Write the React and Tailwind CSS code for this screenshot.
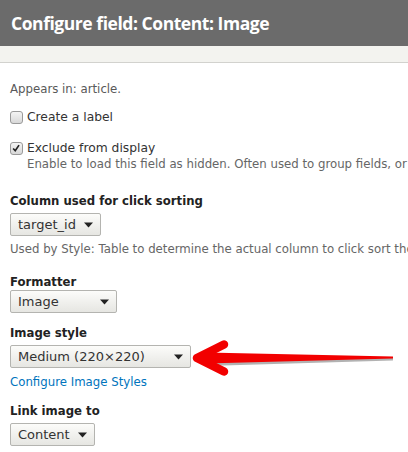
import React from "react";

const body = { fontFamily: '"DejaVu Sans", "Liberation Sans", sans-serif' };

function Caret() {
  return (
    <svg width="9" height="6" viewBox="0 0 9 6" className="shrink-0">
      <path d="M0 0.5 L9 0.5 L4.5 5.5 Z" fill="#222" />
    </svg>
  );
}

function Select({ value, width }) {
  return (
    <div
      className="flex h-[23px] items-center justify-between rounded-[2px] border border-[#b4b4b0] bg-gradient-to-b from-[#fcfcfa] to-[#e6e6e2] pl-[7px] pr-[7px] text-[13px] text-[#333]"
      style={{ width }}
    >
      <span className="whitespace-nowrap leading-none">{value}</span>
      <Caret />
    </div>
  );
}

function Checkbox({ checked }) {
  return (
    <div className="relative h-[13px] w-[13px] shrink-0 rounded-[3px] border border-[#9a9a9a] bg-gradient-to-b from-[#f4f4f4] to-[#d8d8d8]">
      {checked && (
        <svg viewBox="0 0 13 13" className="absolute inset-0 h-[11px] w-[11px]">
          <path d="M2.5 6.5 L5 9 L9.5 2.5" fill="none" stroke="#222" strokeWidth="2" />
        </svg>
      )}
    </div>
  );
}

export default function App() {
  return (
    <div className="relative h-[452px] w-[408px] overflow-hidden bg-white" style={body}>
      <div className="flex h-[46px] items-center bg-[#6b6b6b] pl-[11px]">
        <h1
          className="whitespace-nowrap text-[17.5px] font-bold tracking-[-0.45px] text-white"
          style={{ fontFamily: '"Open Sans", "Liberation Sans", sans-serif' }}
        >
          Configure field: Content: Image
        </h1>
      </div>
      <div className="h-[17px] border-b border-[#d2d2ce] bg-[#f3f3ef]" />

      <div className="whitespace-nowrap px-[10px] pt-[17px]">
        <p className="text-[11.75px] leading-[18px] text-[#595959]">Appears in: article.</p>

        <label className="mt-[10px] flex h-[18px] items-center gap-[4px] text-[12.3px] text-[#333]">
          <Checkbox />
          <span>Create a label</span>
        </label>

        <label className="mt-[14px] flex h-[16px] items-center gap-[4px] text-[12.3px] text-[#333]">
          <Checkbox checked />
          <span>Exclude from display</span>
        </label>
        <p className="pl-[17px] text-[11.75px] leading-[16px] text-[#666]">
          Enable to load this field as hidden. Often used to group fields, or to use them in rewrites.
        </p>

        <div className="mt-[21px] text-[11.7px] font-bold leading-[16px] text-[#222]">Column used for click sorting</div>
        <div className="mt-[4px]">
          <Select value="target_id" width={91} />
        </div>
        <p className="mt-[5px] text-[11.75px] leading-[16px] text-[#666]">
          Used by Style: Table to determine the actual column to click sort the field on.
        </p>

        <div className="mt-[17px] text-[11.7px] font-bold leading-[16px] text-[#222]">Formatter</div>
        <div className="mt-[0px]">
          <Select value="Image" width={107} />
        </div>

        <div className="mt-[12px] text-[11.7px] font-bold leading-[16px] text-[#222]">Image style</div>
        <div className="mt-[4px]">
          <Select value="Medium (220×220)" width={181} />
        </div>
        <a className="mt-[6px] block text-[11.75px] leading-[16px] text-[#0074bd]" href="#">
          Configure Image Styles
        </a>

        <div className="mt-[13px] text-[11.7px] font-bold leading-[16px] text-[#222]">Link image to</div>
        <div className="mt-[4px]">
          <Select value="Content" width={85} />
        </div>
      </div>

      {/* red callout arrow pointing at the image style select */}
      <svg className="pointer-events-none absolute left-0 top-0" width="408" height="452" viewBox="0 0 408 452">
        <path d="M206 359.5 L393 357.5 L393 360.5 L206 366 Z" fill="#555" opacity="0.45" />
        <path d="M206 352.5 L393 356.5 L393 358.5 L206 363.5 Z" fill="#f20000" />
        <path d="M197 358 L224 344.5 M197 358 L224 371.5" stroke="#f20000" strokeWidth="8.5" strokeLinecap="round" fill="none" />
        <path d="M196 358 L210 351 L210 365 Z" fill="#f20000" />
      </svg>
    </div>
  );
}
